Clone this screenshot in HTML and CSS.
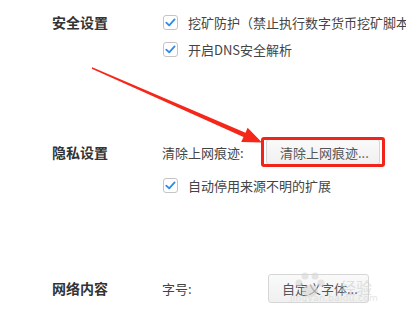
FILE: index.html
```html
<!DOCTYPE html>
<html lang="zh-CN">
<head>
<meta charset="utf-8">
<link rel="stylesheet" href="styles.css">
</head>
<body>
<div class="page">
  <section class="group g1">
    <div class="label l20">安全设置</div>
    <div class="items">
      <div class="row r20"><span class="cb"><svg viewBox="0 0 15 15" width="15" height="15"><path d="M3.3 7.6 L6.2 10.4 L11.6 4.4" fill="none" stroke="#2f8ae8" stroke-width="1.8" stroke-linecap="round" stroke-linejoin="round"/></svg></span><span class="txt">挖矿防护（禁止执行数字货币挖矿脚本）</span></div>
      <div class="row r20"><span class="cb"><svg viewBox="0 0 15 15" width="15" height="15"><path d="M3.3 7.6 L6.2 10.4 L11.6 4.4" fill="none" stroke="#2f8ae8" stroke-width="1.8" stroke-linecap="round" stroke-linejoin="round"/></svg></span><span class="txt">开启DNS安全解析</span></div>
    </div>
  </section>
  <section class="group g2">
    <div class="label l30">隐私设置</div>
    <div class="items">
      <div class="row r30"><span class="field f1">清除上网痕迹:</span><span class="btnwrap"><span class="btn b1">清除上网痕迹...</span><span class="hl"></span></span></div>
      <div class="row r20"><span class="cb"><svg viewBox="0 0 15 15" width="15" height="15"><path d="M3.3 7.6 L6.2 10.4 L11.6 4.4" fill="none" stroke="#2f8ae8" stroke-width="1.8" stroke-linecap="round" stroke-linejoin="round"/></svg></span><span class="txt">自动停用来源不明的扩展</span></div>
    </div>
  </section>
  <section class="group g3">
    <div class="label l30">网络内容</div>
    <div class="items">
      <div class="row r30"><span class="field f2">字号:</span><span class="btnwrap"><span class="btn b2">自定义字体...</span><span class="wm"><svg class="paw" viewBox="0 0 40 30" width="40" height="30"><g fill="#d6d6d6"><ellipse cx="20" cy="21" rx="8" ry="6"/><circle cx="9" cy="13" r="3.5"/><circle cx="15" cy="6" r="3.5"/><circle cx="25" cy="6" r="3.5"/><circle cx="31" cy="13" r="3.5"/></g></svg><span class="wmt">经验</span><span class="wmu">jingyan.baidu.com</span></span></span></div>
      <div class="row r30"><span class="field f2">网页缩放:</span><span class="select"></span></div>
    </div>
  </section>
  <svg class="arrow" viewBox="0 0 406 321" width="406" height="321"><polygon points="92.2,67.3 245.5,132.8 247.6,127.8 262,142.4 241.2,142 243.5,137.1 91.8,68.7" fill="#f5261a"/></svg>
</div>
</body>
</html>
```

FILE: styles.css
```css
html, body {
  margin: 0;
  padding: 0;
  background: #fff;
}
body {
  font-family: "Noto Sans CJK SC", "Noto Sans", sans-serif;
  font-size: 13px;
  color: #444;
  width: 406px;
  height: 321px;
  overflow: hidden;
}
.page {
  position: relative;
  width: 406px;
  height: 321px;
  overflow: hidden;
  padding-left: 52px;
  box-sizing: border-box;
}
.group {
  display: flex;
  align-items: flex-start;
}
.g1 { padding-top: 12px; }
.g2 { margin-top: 78px; }
.g3 { margin-top: 78px; }
.label {
  width: 110px;
  flex: none;
  font-size: 14px;
  font-weight: bold;
  color: #333;
}
.l20 { line-height: 20px; }
.l30 { line-height: 30px; }
.items {
  display: flex;
  flex-direction: column;
  flex: 1;
  min-width: 0;
}
.g1 .items { gap: 7px; }
.g2 .items { gap: 8px; }
.g3 .items { gap: 9px; }
.row {
  display: flex;
  align-items: center;
  white-space: nowrap;
}
.r20 { height: 20px; }
.r30 { height: 30px; }
.cb {
  flex: none;
  width: 15px;
  height: 15px;
  box-sizing: border-box;
  border: 1px solid #c4c4c4;
  border-radius: 3px;
  margin-left: 1px;
  margin-right: 10px;
  display: flex;
  align-items: center;
  justify-content: center;
  background: #fff;
}
.cb svg { display: block; flex: none; }
.txt { color: #444; }
.field { flex: none; color: #444; }
.f1 { width: 104px; }
.f2 { width: 106px; }
.btnwrap {
  position: relative;
  display: flex;
  flex: none;
}
.btn {
  display: flex;
  align-items: center;
  box-sizing: border-box;
  padding: 0 13px;
  border: 1px solid #d6d6d6;
  border-radius: 3px;
  background: linear-gradient(#fafafa, #f0f0f0);
  color: #555;
}
.b1 { width: 114px; height: 26px; }
.b2 { width: 101px; height: 29px; }
.hl {
  position: absolute;
  left: -5px;
  top: -2px;
  width: 124px;
  height: 30px;
  box-sizing: border-box;
  border: 3px solid #f02418;
  border-radius: 3px;
}
.select {
  flex: none;
  width: 200px;
  height: 30px;
  box-sizing: border-box;
  border: 1px solid #d6d6d6;
  border-radius: 3px;
  margin-top: 9px;
  align-self: flex-start;
}
.wm {
  position: absolute;
  left: 22px;
  top: -4px;
  width: 90px;
  height: 36px;
  opacity: 0.6;
}
.paw {
  position: absolute;
  left: 0;
  top: 0;
}
.wmt {
  position: absolute;
  left: 50px;
  top: 8px;
  font-size: 16px;
  line-height: 18px;
  color: #cfcfcf;
}
.wmu {
  position: absolute;
  left: 0;
  top: 23px;
  font-family: "DejaVu Sans", sans-serif;
  font-size: 9px;
  line-height: 10px;
  color: #d4d4d4;
  letter-spacing: 0.3px;
}
.arrow {
  position: absolute;
  left: 0;
  top: 0;
  pointer-events: none;
}
```
